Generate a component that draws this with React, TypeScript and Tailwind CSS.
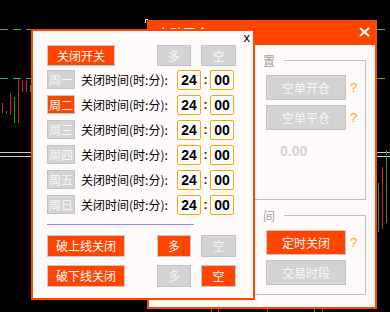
import React from "react";

const CJK = "font-['Noto_Sans_CJK_SC','Noto_Sans',sans-serif]";

const Btn = ({
  label,
  on,
  className = "",
}: {
  label: string;
  on?: boolean;
  className?: string;
}) => (
  <div
    className={`flex items-center justify-center border text-[12px] leading-none ${CJK} ${
      on
        ? "bg-[#FF4500] text-white border-[#c8c8c8]"
        : "bg-[#D3D3D3] text-[#f7f7f7] border-[#c4c4c4]"
    } ${className}`}
  >
    {label}
  </div>
);

const TimeBox = ({ value }: { value: string }) => (
  <div className="flex h-[20px] w-[24px] items-center justify-center rounded-[2px] border border-[#FFA500] bg-white font-['Liberation_Sans',sans-serif] text-[14px] font-bold leading-none text-black">
    {value}
  </div>
);

const Help = () => (
  <span className="w-[7px] font-['Liberation_Sans',sans-serif] text-[13px] text-[#FFA500]">?</span>
);

const days = [
  { name: "周一", on: false },
  { name: "周二", on: true },
  { name: "周三", on: false },
  { name: "周四", on: false },
  { name: "周五", on: false },
  { name: "周日", on: false },
];

// background chart, just what peeks out around the two windows
const Chart = () => (
  <svg className="absolute inset-0" width={390} height={312}>
    <line x1={0} y1={29.5} x2={390} y2={29.5} stroke="#2fc42f" strokeDasharray="8 5" />
    <line x1={0} y1={78.5} x2={390} y2={78.5} stroke="#2fc42f" strokeDasharray="8 5" />
    <line x1={0} y1={152.5} x2={390} y2={152.5} stroke="#c8c8c8" />
    <line x1={0} y1={156.5} x2={390} y2={156.5} stroke="#c8c8c8" />
    <g stroke="#dc143c">
      <line x1={2.5} y1={103} x2={2.5} y2={113} />
      <line x1={10.5} y1={93} x2={10.5} y2={115} />
      <line x1={18.5} y1={79} x2={18.5} y2={123} />
      <line x1={22.5} y1={80} x2={22.5} y2={92} />
      <line x1={26.5} y1={80} x2={26.5} y2={92} />
      <line x1={382.5} y1={167} x2={382.5} y2={229} />
      <line x1={218.5} y1={309} x2={218.5} y2={312} />
      <line x1={267.5} y1={309} x2={267.5} y2={312} />
      <line x1={322.5} y1={309} x2={322.5} y2={312} />
    </g>
    <g stroke="#1fa01f">
      <line x1={6.5} y1={111} x2={6.5} y2={114} />
      <line x1={14.5} y1={97} x2={14.5} y2={123} />
      <line x1={30.5} y1={85} x2={30.5} y2={92} />
      <line x1={378.5} y1={183} x2={378.5} y2={232} />
      <line x1={386.5} y1={150} x2={386.5} y2={223} />
      <line x1={211.5} y1={309} x2={211.5} y2={312} />
      <line x1={314.5} y1={309} x2={314.5} y2={312} />
    </g>
    <path d="M145.5 23 V19.5 H148" stroke="#fff" fill="none" />
  </svg>
);

const BackWindow = () => (
  <div className="absolute left-[147px] top-[20px] flex h-[289px] w-[230px] flex-col bg-[#FF4500]">
    <div className="relative flex h-[25px] items-center pl-[10px]">
      <span className={`text-[13px] leading-none text-white ${CJK}`}>自动平仓</span>
      <svg className="absolute right-[7px] top-[7px]" width={11} height={10}>
        <path d="M1 1 L10 9 M10 1 L1 9" stroke="#fff" strokeWidth={2} />
      </svg>
    </div>
    <div className="mx-[2px] mb-[2px] flex flex-1 flex-col gap-[15px] bg-[#FFFAFA] pl-[8px] pr-[9px] pt-[15px]">
      <div className="relative flex h-[140px] flex-col gap-[5px] border border-[#c0c0c0] pt-[14px]">
        <span className={`absolute -top-[8px] left-[41px] bg-[#FFFAFA] pl-[4px] pr-px text-[12px] leading-[15px] tracking-[8px] text-[#a0a0a0] ${CJK}`}>
          平仓设置
        </span>
        <div className="flex items-center justify-end gap-[4px] pr-[8px]">
          <Btn label="空单开仓" className="h-[25px] w-[80px]" />
          <Help />
        </div>
        <div className="flex items-center justify-end gap-[4px] pr-[8px]">
          <Btn label="空单平仓" className="h-[25px] w-[80px]" />
          <Help />
        </div>
        <div className="mt-[9px] pl-[122px] font-['Liberation_Sans',sans-serif] text-[14px] font-bold leading-none text-[#d3d3d3]">
          0.00
        </div>
      </div>
      <div className="relative flex h-[80px] flex-col gap-[5px] border border-[#c0c0c0] pt-[14px]">
        <span className={`absolute -top-[8px] left-[41px] bg-[#FFFAFA] pl-[4px] pr-px text-[12px] leading-[15px] tracking-[8px] text-[#a0a0a0] ${CJK}`}>
          平仓时间
        </span>
        <div className="flex items-center justify-end gap-[4px] pr-[8px]">
          <Btn label="定时关闭" on className="h-[25px] w-[80px]" />
          <Help />
        </div>
        <div className="flex items-center justify-end gap-[4px] pr-[8px]">
          <Btn label="交易时段" className="h-[25px] w-[80px]" />
          <span className="w-[7px]" />
        </div>
      </div>
    </div>
  </div>
);

const FrontWindow = () => (
  <div className="absolute left-[31px] top-[29px] h-[271px] w-[224px] border-2 border-[#FF4500] bg-[#FFFAFA]">
    <span className="absolute right-[3px] top-[0px] font-['Liberation_Sans',sans-serif] text-[13px] leading-[14px] text-black">
      x
    </span>
    <div className="flex flex-col pl-[14px] pt-[14px]">
      <div className="flex h-[21px]">
        <Btn label="关闭开关" on className="h-[21px] w-[68px]" />
        <Btn label="多" className="ml-[42px] h-[21px] w-[34px]" />
        <Btn label="空" className="ml-[10px] h-[21px] w-[35px]" />
      </div>
      <div className="mt-[4px] flex flex-col gap-[5px]">
        {days.map((d) => (
          <div key={d.name} className="flex h-[20px] items-center">
            <Btn label={d.name} on={d.on} className="h-[19px] w-[28px] self-start" />
            <span className={`ml-[6px] w-[96px] text-[12px] leading-none text-black ${CJK}`}>
              关闭时间(时:分):
            </span>
            <TimeBox value="24" />
            <span className="w-[9px] text-center font-['Liberation_Sans',sans-serif] text-[12px] font-bold text-[#222]">
              :
            </span>
            <TimeBox value="00" />
          </div>
        ))}
      </div>
      <div className="mt-[9px] h-px w-[147px] bg-[#9a8ae0]" />
      <div className="mt-[10px] flex h-[22px]">
        <Btn label="破上线关闭" on className="h-[22px] w-[78px]" />
        <Btn label="多" on className="ml-[32px] h-[22px] w-[34px]" />
        <Btn label="空" className="ml-[10px] h-[22px] w-[35px]" />
      </div>
      <div className="mt-[8px] flex h-[22px]">
        <Btn label="破下线关闭" on className="h-[22px] w-[78px]" />
        <Btn label="多" className="ml-[32px] h-[22px] w-[34px]" />
        <Btn label="空" on className="ml-[10px] h-[22px] w-[35px]" />
      </div>
    </div>
  </div>
);

export default function App() {
  return (
    <div className="relative h-[312px] w-[390px] overflow-hidden bg-black">
      <Chart />
      <BackWindow />
      <FrontWindow />
    </div>
  );
}
